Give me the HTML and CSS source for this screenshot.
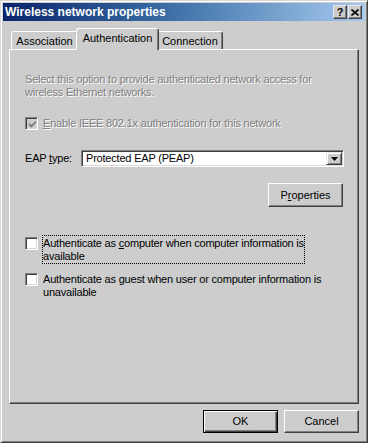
FILE: index.html
```html
<!DOCTYPE html>
<html lang="en">
<head>
    <meta charset="UTF-8">
    <meta name="viewport" content="width=device-width, initial-scale=1.0">
    <title>Wireless network properties</title>
    <link rel="stylesheet" href="styles.css">
</head>
<body>
    <div class="window">
        <div class="titlebar">
            <span class="title">Wireless network properties</span>
            <div class="caption-btns">
                <span class="cap-btn help">?</span>
                <span class="cap-btn">
                    <svg width="8" height="7" viewBox="0 0 8 7"><path d="M0.5 0.5 L7.5 6.5 M7.5 0.5 L0.5 6.5" stroke="#000" stroke-width="1.6"/></svg>
                </span>
            </div>
        </div>

        <div class="dialog">
            <div class="tabs">
                <div class="tab tab-assoc">Association</div>
                <div class="tab active">Authentication</div>
                <div class="tab tab-conn">Connection</div>
            </div>

            <div class="panel">
                <p class="note disabled">Select this option to provide authenticated network access for<br>wireless Ethernet networks.</p>

                <div class="check-row enable disabled">
                    <span class="checkbox checked">
                        <svg width="9" height="9" viewBox="0 0 9 9"><path d="M1 4 L3.3 6.3 L8 1.6" fill="none" stroke="#808080" stroke-width="2"/></svg>
                    </span>
                    <span class="check-label"><u>E</u>nable IEEE 802.1x authentication for this network</span>
                </div>

                <div class="eap-row">
                    <label class="eap-label">EAP <u>t</u>ype:</label>
                    <div class="combo">
                        <span class="combo-text">Protected EAP (PEAP)</span>
                        <span class="combo-btn">
                            <svg width="7" height="4" viewBox="0 0 7 4"><path d="M0 0 H7 L3.5 4 Z" fill="#000"/></svg>
                        </span>
                    </div>
                </div>

                <div class="props-row">
                    <button class="btn props">P<u>r</u>operties</button>
                </div>

                <div class="check-row option first">
                    <span class="checkbox"></span>
                    <span class="opt-label focus">Authenticate as <u>c</u>omputer when computer information is<br>available</span>
                </div>

                <div class="check-row option second">
                    <span class="checkbox"></span>
                    <span class="opt-label">Authenticate as <u>g</u>uest when user or computer information is<br>unavailable</span>
                </div>
            </div>

            <div class="footer">
                <button class="btn default">OK</button>
                <button class="btn">Cancel</button>
            </div>
        </div>
    </div>
</body>
</html>
```

FILE: styles.css
```css
/* Classic Windows 2000 style dialog */
body {
    margin: 0;
    background-color: #cdcdcd;
    font-family: 'Liberation Sans', Arial, sans-serif;
    font-size: 11px;
    line-height: 13px;
    color: #000;
}
.window {
    width: 368px;
    height: 443px;
    box-sizing: border-box;
    border: 1px solid;
    border-color: #d8d8d8 #404040 #404040 #d8d8d8;
    box-shadow: inset 1px 1px #fff, inset -1px -1px #808080;
    padding: 2px;
    background-color: #cdcdcd;
    display: flex;
    flex-direction: column;
}
.titlebar {
    height: 18px;
    flex: none;
    display: flex;
    align-items: center;
    justify-content: space-between;
    padding: 0 3px 0 2px;
    background: linear-gradient(to right, #0a246a 0%, #3a6ea5 45%, #a6caf0 100%);
    color: #fff;
    font-weight: bold;
}
.title {
    font-size: 12px;
}
.caption-btns {
    display: flex;
    gap: 1px;
}
.cap-btn {
    width: 14px;
    height: 14px;
    box-sizing: border-box;
    display: flex;
    align-items: center;
    justify-content: center;
    background-color: #cdcdcd;
    border: 1px solid;
    border-color: #e8e8e8 #404040 #404040 #e8e8e8;
    box-shadow: inset -1px -1px #808080;
    color: #000;
    font-size: 11px;
    font-weight: bold;
}
.dialog {
    flex: 1;
    padding: 7px 6px 0 6px;
    display: flex;
    flex-direction: column;
}

/* Tabs */
.tabs {
    display: flex;
    align-items: flex-end;
    height: 21px;
    padding-left: 2px;
}
.tab {
    box-sizing: border-box;
    height: 18px;
    padding-top: 3px;
    text-align: center;
    white-space: nowrap;
    border: 1px solid;
    border-bottom: none;
    border-color: #fff #404040 transparent #fff;
    border-radius: 3px 3px 0 0;
    box-shadow: inset -1px 0 #808080;
    background-color: #cdcdcd;
}
.tab-assoc {
    width: 67px;
}
.tab-conn {
    width: 66px;
}
.tab.active {
    width: 83px;
    height: 22px;
    margin: 0 -2px -1px -2px;
    position: relative;
    z-index: 1;
}

/* Tab page */
.panel {
    height: 355px;
    flex: none;
    box-sizing: border-box;
    border: 1px solid;
    border-color: #fff #404040 #404040 #fff;
    box-shadow: inset -1px -1px #808080;
    padding: 23px 14px 0 15px;
    letter-spacing: -0.2px;
}
.disabled {
    color: #808080;
    text-shadow: 1px 1px 0 #fff;
}
.note {
    margin: 0;
}
.check-row {
    display: flex;
    align-items: flex-start;
}
.checkbox {
    width: 13px;
    height: 13px;
    flex: none;
    box-sizing: border-box;
    background-color: #fff;
    border: 1px solid;
    border-color: #808080 #fff #fff #808080;
    box-shadow: inset 1px 1px #404040, inset -1px -1px #d8d8d8;
    display: flex;
    align-items: center;
    justify-content: center;
}
.checkbox svg {
    margin: 1px 0 0 1px;
}
.disabled .checkbox {
    background-color: #cdcdcd;
}
.enable {
    margin-top: 18px;
}
.enable .check-label {
    margin-left: 5px;
}

/* EAP type */
.eap-row {
    display: flex;
    align-items: center;
    margin-top: 20px;
}
.eap-label {
    width: 56px;
    flex: none;
}
.combo {
    flex: 1;
    height: 17px;
    box-sizing: border-box;
    display: flex;
    align-items: center;
    padding: 1px;
    background-color: #fff;
    border: 1px solid;
    border-color: #808080 #fff #fff #808080;
    box-shadow: inset 1px 1px #404040, inset -1px -1px #d8d8d8;
}
.combo-text {
    flex: 1;
    padding-left: 3px;
}
.combo-btn {
    width: 16px;
    height: 13px;
    box-sizing: border-box;
    display: flex;
    align-items: center;
    justify-content: center;
    background-color: #cdcdcd;
    border: 1px solid;
    border-color: #e8e8e8 #404040 #404040 #e8e8e8;
    box-shadow: inset 1px 1px #fff, inset -1px -1px #808080;
}

/* Buttons */
.btn {
    width: 75px;
    height: 23px;
    box-sizing: border-box;
    padding: 0;
    font: inherit;
    color: #000;
    background-color: #cdcdcd;
    border: 1px solid;
    border-color: #fff #404040 #404040 #fff;
    box-shadow: inset -1px -1px #808080;
}
.btn.default {
    border-color: #000;
    box-shadow: inset 1px 1px #fff, inset -1px -1px #404040, inset -2px -2px #808080;
}
.props-row {
    display: flex;
    justify-content: flex-end;
    margin-top: 16px;
}
.props {
    margin-right: 1px;
    height: 24px;
}

/* Option checkboxes */
.option .checkbox {
    margin-top: 2px;
}
.opt-label {
    display: inline-block;
    margin-left: 4px;
    padding-top: 1px;
    border: 1px dotted transparent;
}
.opt-label.focus {
    border-color: #000;
}
.option.first {
    margin-top: 28px;
}
.option.second {
    margin-top: 7px;
}

.footer {
    display: flex;
    justify-content: flex-end;
    gap: 6px;
    margin-top: 6px;
}
```
